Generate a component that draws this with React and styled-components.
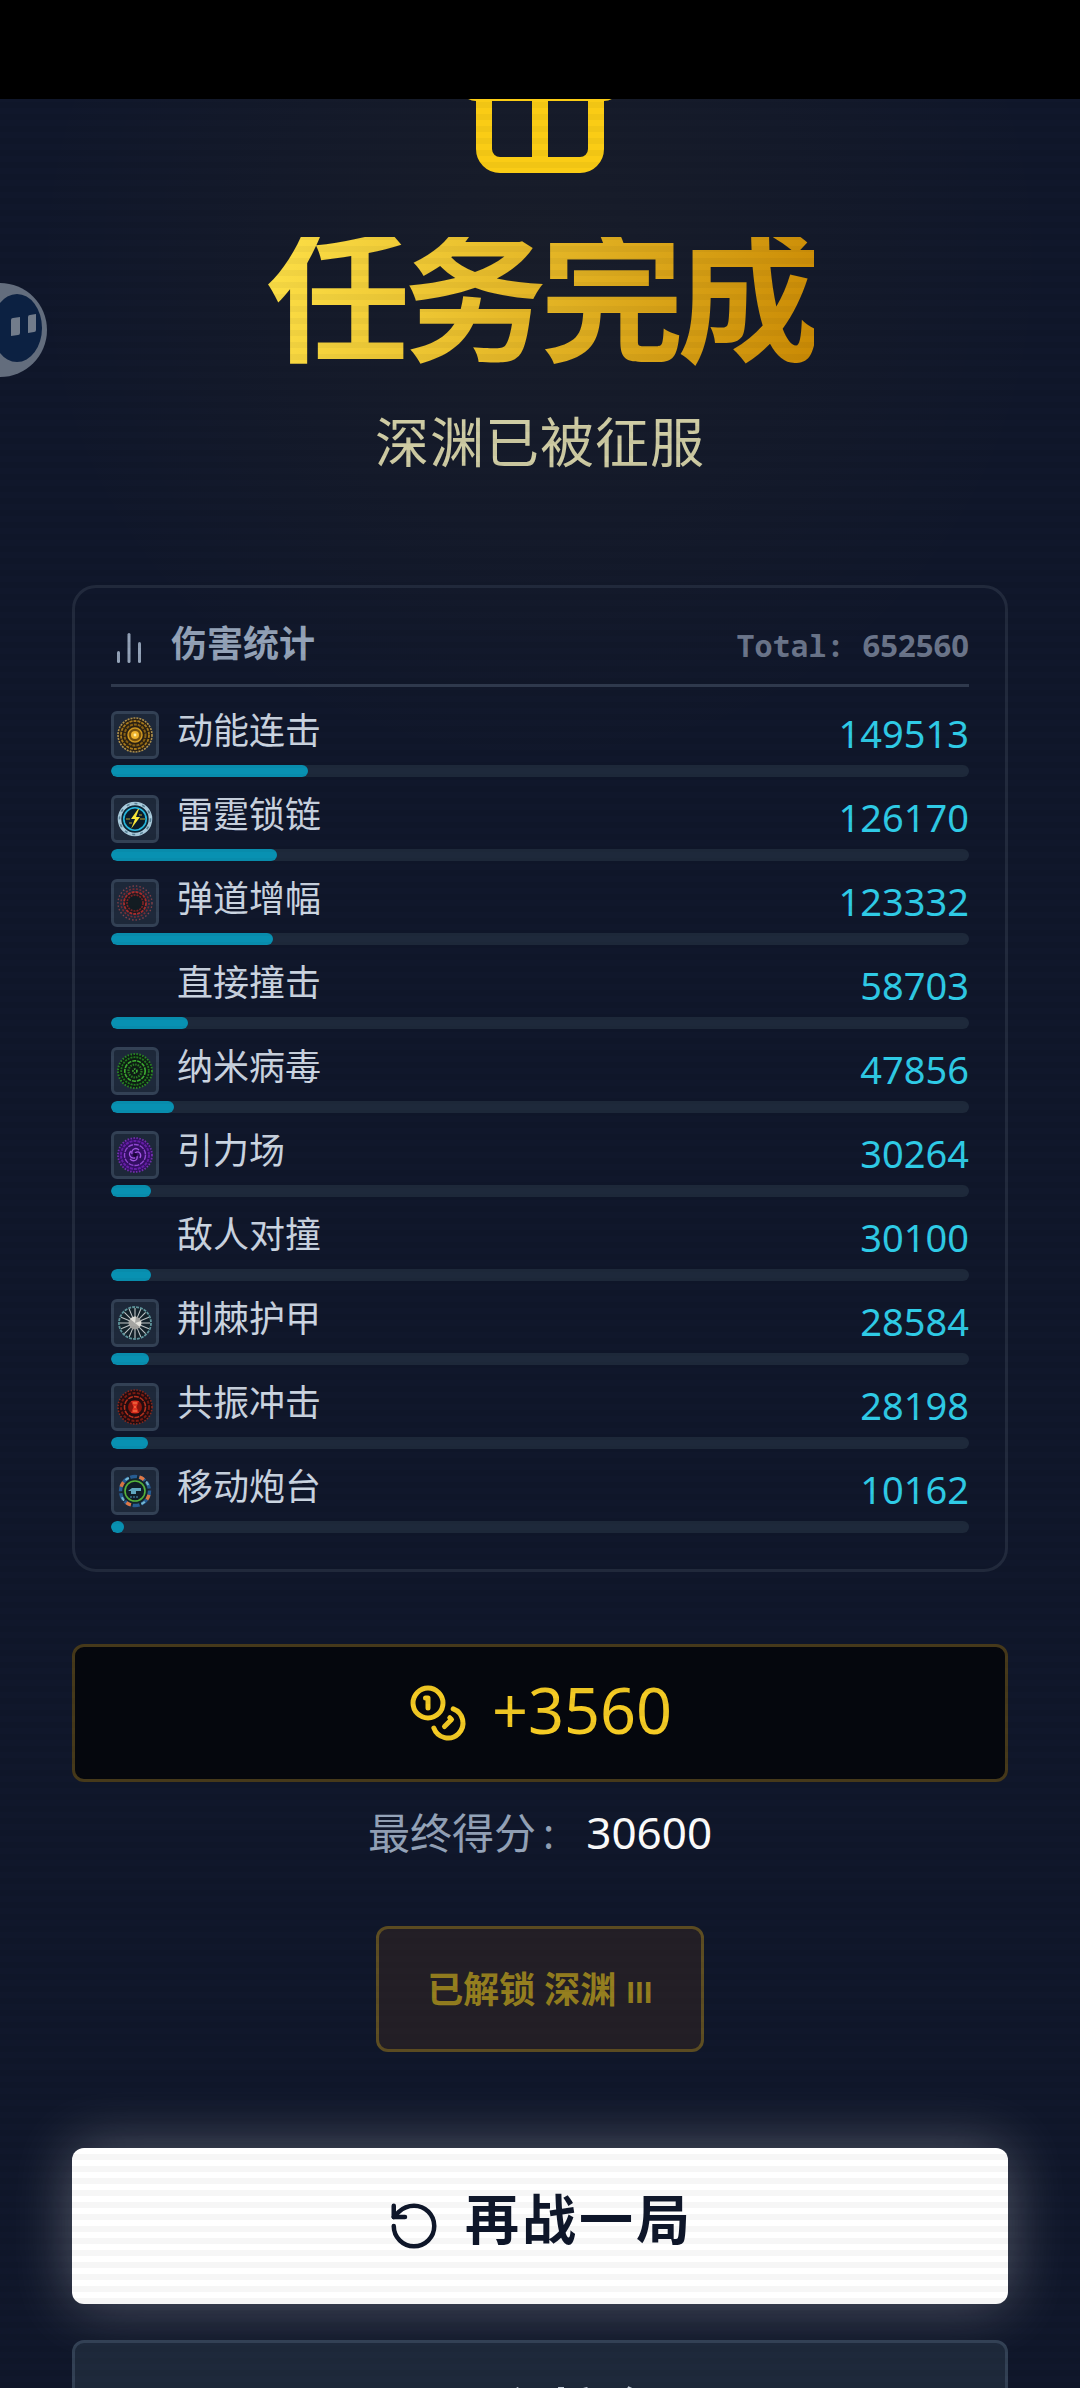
import React from 'react';
import styled, { createGlobalStyle } from 'styled-components';
import { ChartNoAxesColumn, Coins, Gift, House, RotateCcw } from 'lucide-react';

const sans = `Roboto, 'Noto Sans CJK SC', sans-serif`;
const mono = `'Noto Sans Mono', 'Noto Sans CJK SC', monospace`;
const numeric = `'Noto Sans', 'Noto Sans CJK SC', sans-serif`;

const GlobalStyle = createGlobalStyle`
  *, *::before, *::after { box-sizing: border-box; }
  html, body { margin: 0; background: #10172b; }
  body { font-family: ${sans}; overflow-x: hidden; }
`;

const Screen = styled.div`
  position: relative;
  height: 100vh;
  overflow: hidden;
  display: flex;
  flex-direction: column;
  background: radial-gradient(circle at 50% 260px, rgba(234, 179, 8, 0.04), rgba(234, 179, 8, 0) 520px), #10172b;
`;

const StatusBar = styled.div`
  flex: none;
  height: 99px;
  background: #000;
`;

const Scanlines = styled.div`
  position: absolute;
  inset: 99px 0 0;
  pointer-events: none;
  background: linear-gradient(rgba(0, 0, 0, 0) 50%, rgba(0, 0, 0, 0.035) 50%) 0 9px / 100% 12px;
`;

const Content = styled.main`
  flex: 1;
  min-height: 0;
  overflow: hidden;
  display: flex;
  flex-direction: column;
  align-items: center;
  padding: 0 72px;
`;

const IconClip = styled.div`
  flex: none;
  height: 90px;
  display: flex;
  align-items: flex-end;
  overflow: hidden;
  color: #facc15;

  svg { flex: none; }
`;

const Title = styled.h1`
  flex: none;
  margin: 48px 0 0;
  font-size: 144px;
  line-height: 130px;
  font-weight: 700;
  letter-spacing: -7px;
  color: transparent;
  background: linear-gradient(105deg, #fde047, #ca8a04);
  -webkit-background-clip: text;
  background-clip: text;
`;

const Subtitle = styled.p`
  flex: none;
  margin: 36px 0 0;
  font-size: 54px;
  line-height: 84px;
  letter-spacing: 1px;
  color: rgba(254, 249, 195, 0.8);
`;

const Panel = styled.section`
  flex: none;
  align-self: stretch;
  margin-top: 98px;
  padding: 36px;
  border: 3px solid #222a3d;
  border-radius: 24px;
`;

const PanelHeader = styled.header`
  display: flex;
  align-items: center;
  justify-content: space-between;
  height: 63px;
  padding-bottom: 12px;
  border-bottom: 3px solid #2f394d;
`;

const PanelTitle = styled.h2`
  display: flex;
  align-items: center;
  gap: 24px;
  margin: 0;
  font-size: 36px;
  line-height: 48px;
  font-weight: 700;
  color: #94a3b8;
`;

const Label = styled.span`
  padding-bottom: ${(p) => p.$lift || 0}px;
`;

const Total = styled.span`
  padding-bottom: 6px;
  font-family: ${mono};
  font-size: 30px;
  line-height: 42px;
  font-weight: 700;
  color: #6b758a;
`;

const Digits = styled.span`
  font-family: ${numeric};
  font-size: ${(p) => p.$size}px;
  font-weight: ${(p) => (p.$bold ? 700 : 400)};
  color: ${(p) => p.$color || 'inherit'};
`;

const StatList = styled.ul`
  display: grid;
  gap: 18px;
  margin: 24px 0 0;
  padding: 0;
  list-style: none;
`;

const StatRow = styled.li`
  display: grid;
  gap: 6px;
`;

const StatLine = styled.div`
  display: flex;
  align-items: center;
  height: 48px;
`;

const Badge = styled.span`
  display: flex;
  align-items: center;
  justify-content: center;
  width: 48px;
  height: 48px;
  margin-right: 18px;
  border: 3px solid ${(p) => (p.$empty ? 'transparent' : '#334155')};
  border-radius: 6px;
  background: ${(p) => (p.$empty ? 'transparent' : '#1e293b')};
`;

const StatName = styled.span`
  flex: 1;
  font-size: 36px;
  line-height: 42px;
  padding-bottom: 6px;
  color: #cbd5e1;
`;

const StatValue = styled.span`
  padding-bottom: 4px;
  font-family: ${numeric};
  font-size: 38px;
  line-height: 42px;
  color: #2fcbe6;
`;

const Track = styled.div`
  height: 12px;
  border-radius: 6px;
  background: #1e293b;
  overflow: hidden;
`;

const Fill = styled.div`
  height: 100%;
  border-radius: 6px;
  background: #0891b2;
`;

const Reward = styled.div`
  flex: none;
  align-self: stretch;
  display: flex;
  align-items: center;
  justify-content: center;
  gap: 24px;
  height: 138px;
  margin-top: 72px;
  border: 3px solid #46391a;
  border-radius: 12px;
  background: #05070d;
  font-family: ${numeric};
  font-size: 63px;
  line-height: 84px;
  color: #f5cb24;
`;

const Score = styled.p`
  flex: none;
  margin: 20px 0 0;
  font-family: ${mono};
  font-size: 42px;
  line-height: 60px;
  white-space: pre;
  color: #94a3b8;
`;

const Unlock = styled.div`
  flex: none;
  display: flex;
  align-items: baseline;
  gap: 10px;
  height: 126px;
  margin-top: 63px;
  padding: 35px 48px 0;
  border: 3px solid #5e4e22;
  border-radius: 12px;
  background: #231f26;
  font-size: 36px;
  line-height: 54px;
  font-weight: 700;
  color: #957f1f;
`;

const Tier = styled.span`
  font-size: 30px;
`;

const Button = styled.button`
  flex: none;
  align-self: stretch;
  display: flex;
  align-items: center;
  justify-content: center;
  gap: 24px;
  height: 156px;
  margin-top: ${(p) => (p.$primary ? 96 : 36)}px;
  padding: 0;
  border: ${(p) => (p.$primary ? 'none' : '3px solid #334155')};
  border-radius: 12px;
  background: ${(p) => (p.$primary ? '#fff' : '#1e293b')};
  box-shadow: ${(p) => (p.$primary ? '0 0 60px rgba(255, 255, 255, 0.3)' : 'none')};
  font-family: ${sans};
  font-size: 54px;
  font-weight: 700;
  letter-spacing: 3px;
  color: ${(p) => (p.$primary ? '#0f172a' : '#cbd5e1')};
`;

const Floating = styled.button`
  position: absolute;
  left: -48px;
  top: 282px;
  width: 96px;
  height: 96px;
  padding: 0;
  border: none;
  background: none;
`;

const emblems = {
  gold: (
    <>
      <circle cx="18" cy="18" r="17" fill="#2a2013" stroke="#b0924f" strokeWidth="1.6" strokeDasharray="2 1" />
      <circle cx="18" cy="18" r="14" fill="none" stroke="#a87a1c" strokeWidth="1.8" strokeDasharray="3 1" />
      <circle cx="18" cy="18" r="10.5" fill="none" stroke="#8a6214" strokeWidth="2" strokeDasharray="3 1" />
      <circle cx="18" cy="18" r="7" fill="#7a520d" stroke="#d19a22" strokeWidth="1.5" />
      <circle cx="18" cy="18" r="4" fill="#f0b32e" />
      <circle cx="18" cy="18" r="1.4" fill="#fff0a8" />
    </>
  ),
  bolt: (
    <>
      <circle cx="18" cy="18" r="15.5" fill="#0d2534" stroke="#a9cbdc" strokeWidth="3.6" />
      <circle cx="18" cy="18" r="15.5" fill="none" stroke="#5b8296" strokeWidth="1.6" strokeDasharray="3 5" />
      <circle cx="18" cy="18" r="11.2" fill="#0a1c2b" stroke="#27b9e0" strokeWidth="1.6" />
      <path d="M9 18h4M23 18h5M12 22h3M22 14h3" stroke="#b9a52a" strokeWidth="1" />
      <path d="M21 8l-7 10h4l-4 10 9-12h-4l3-8z" fill="#fde93a" />
    </>
  ),
  ember: (
    <>
      <circle cx="18" cy="18" r="17" fill="none" stroke="#84424a" strokeWidth="1.4" strokeDasharray="1.5 2" />
      <circle cx="18" cy="18" r="14" fill="none" stroke="#7c2c32" strokeWidth="1.6" strokeDasharray="2 1.5" />
      <circle cx="18" cy="18" r="11" fill="#1b1a20" stroke="#a82c2c" strokeWidth="1.8" strokeDasharray="3 1" />
      <circle cx="18" cy="18" r="8" fill="#131c22" stroke="#822326" strokeWidth="1.6" strokeDasharray="2 1" />
    </>
  ),
  virus: (
    <>
      <circle cx="18" cy="18" r="17" fill="#0d1c14" stroke="#2a8a24" strokeWidth="2" strokeDasharray="1.5 1.5" />
      <circle cx="18" cy="18" r="13.8" fill="none" stroke="#237a20" strokeWidth="1.8" strokeDasharray="2 1" />
      <circle cx="18" cy="18" r="10.2" fill="none" stroke="#3fae33" strokeWidth="1.6" strokeDasharray="4 1" />
      <circle cx="18" cy="18" r="6.5" fill="none" stroke="#2a7c24" strokeWidth="2.2" strokeDasharray="1.5 1" />
      <circle cx="18" cy="18" r="2" fill="none" stroke="#45b839" strokeWidth="1.5" strokeDasharray="1.5 1" />
    </>
  ),
  gravity: (
    <>
      <circle cx="18" cy="18" r="17" fill="#350f66" stroke="#7530b0" strokeWidth="1.8" strokeDasharray="1.5 1.5" />
      <circle cx="18" cy="18" r="14" fill="none" stroke="#651fa6" strokeWidth="2" strokeDasharray="3 1" />
      <circle cx="18" cy="18" r="10.5" fill="none" stroke="#9148d2" strokeWidth="1.4" strokeDasharray="5 1" />
      <path d="M18 16c4-3 7 1 5 5M20 19c1 5-4 6-7 3M18 21c-5 1-7-4-4-7M15 17c-1-5 4-7 7-4" fill="none" stroke="#a557e6" strokeWidth="1.3" />
      <circle cx="18" cy="18" r="2" fill="#190638" />
    </>
  ),
  thorn: (
    <>
      <circle cx="18" cy="18" r="16" fill="#14222b" stroke="#5f959c" strokeWidth="1.8" strokeDasharray="3 1" />
      <path
        d="M18 3v30M3 18h30M7.4 7.4l21.2 21.2M28.6 7.4L7.4 28.6M12.2 4.1l11.6 27.8M23.8 4.1L12.2 31.9M4.1 12.2l27.8 11.6M31.9 12.2L4.1 23.8"
        stroke="#c3c9cb"
        strokeWidth="1.1"
      />
      <circle cx="18" cy="18" r="6.5" fill="#a5a5a2" />
      <path d="M18 18l-5-4a6.5 6.5 0 0 1 6-2.5zM18 18l5 4a6.5 6.5 0 0 0 1-6z" fill="#e3e2dc" />
    </>
  ),
  pulse: (
    <>
      <circle cx="18" cy="18" r="17" fill="#220c10" stroke="#8c281c" strokeWidth="1.6" strokeDasharray="1.5 1.5" />
      <circle cx="18" cy="18" r="14" fill="none" stroke="#7a1b12" strokeWidth="2" strokeDasharray="3 1.5" />
      <circle cx="18" cy="18" r="10.5" fill="none" stroke="#b4301d" strokeWidth="1.6" strokeDasharray="5 1" />
      <circle cx="18" cy="18" r="7" fill="#8a150c" />
      <path d="M14 12h8l-2.5 6 2.5 6h-8l2.5-6z" fill="#e23220" />
      <path d="M16 14h4M16 22h4M17 18h2" stroke="#ff8b55" strokeWidth="1.2" />
    </>
  ),
  turret: (
    <>
      <circle cx="18" cy="18" r="14.5" fill="#13242c" stroke="#275d94" strokeWidth="3.4" strokeDasharray="7 2" />
      <circle cx="18" cy="18" r="14.5" fill="none" stroke="#e07845" strokeWidth="3.4" strokeDasharray="5 17.8" strokeDashoffset="-4" />
      <circle cx="18" cy="18" r="14.5" fill="none" stroke="#79bcd4" strokeWidth="2" strokeDasharray="4 18.8" strokeDashoffset="-12" />
      <circle cx="18" cy="18" r="10" fill="#101d28" stroke="#56b43c" strokeWidth="1.6" />
      <path d="M11 18l4-3h9v3h-5v3h-5v-3z" fill="#5fa6bf" />
      <path d="M13 24h9" stroke="#3b6f8f" strokeWidth="1.5" strokeDasharray="2 1" />
    </>
  ),
};

const total = 652560;

const stats = [
  { name: '动能连击', value: 149513, emblem: 'gold' },
  { name: '雷霆锁链', value: 126170, emblem: 'bolt' },
  { name: '弹道增幅', value: 123332, emblem: 'ember' },
  { name: '直接撞击', value: 58703 },
  { name: '纳米病毒', value: 47856, emblem: 'virus' },
  { name: '引力场', value: 30264, emblem: 'gravity' },
  { name: '敌人对撞', value: 30100 },
  { name: '荆棘护甲', value: 28584, emblem: 'thorn' },
  { name: '共振冲击', value: 28198, emblem: 'pulse' },
  { name: '移动炮台', value: 10162, emblem: 'turret' },
];

export default function App() {
  return (
    <Screen>
      <GlobalStyle />
      <StatusBar />
      <Content>
        <IconClip>
          <Gift size={192} />
        </IconClip>
        <Title>任务完成</Title>
        <Subtitle>深渊已被征服</Subtitle>

        <Panel>
          <PanelHeader>
            <PanelTitle>
              <ChartNoAxesColumn size={36} />
              <Label $lift={6}>伤害统计</Label>
            </PanelTitle>
            <Total>
              Total: <Digits $size={31} $bold>{total}</Digits>
            </Total>
          </PanelHeader>
          <StatList>
            {stats.map((s) => (
              <StatRow key={s.name}>
                <StatLine>
                  <Badge $empty={!s.emblem}>
                    {s.emblem && (
                      <svg width="36" height="36" viewBox="0 0 36 36" aria-hidden="true">
                        {emblems[s.emblem]}
                      </svg>
                    )}
                  </Badge>
                  <StatName>{s.name}</StatName>
                  <StatValue>{s.value}</StatValue>
                </StatLine>
                <Track>
                  <Fill style={{ width: `${(s.value / total) * 100}%` }} />
                </Track>
              </StatRow>
            ))}
          </StatList>
        </Panel>

        <Reward>
          <Coins size={60} />
          <Label $lift={6}>+3560</Label>
        </Reward>
        <Score>
          最终得分: <Digits $size={44} $color="#fff">30600</Digits>
        </Score>
        <Unlock>
          已解锁 深渊 <Tier>III</Tier>
        </Unlock>

        <Button type="button" $primary>
          <RotateCcw size={54} />
          <Label $lift={20}>再战一局</Label>
        </Button>
        <Button type="button">
          <House size={54} />
          <Label $lift={16}>主控台</Label>
        </Button>
      </Content>
      <Scanlines />
      <Floating type="button" aria-label="助手">
        <svg width="96" height="96" viewBox="0 0 96 96" aria-hidden="true">
          <circle cx="48" cy="48" r="47" fill="#636d7d" />
          <ellipse cx="65" cy="46" rx="25" ry="34" fill="#0c2142" />
          <path d="M59 38q0-2 2-2l7-1v16q0 2-2 2l-7 1zM76 35q0-2 2-2l6-1v16q0 2-2 2l-6 1z" fill="#727c8b" />
        </svg>
      </Floating>
    </Screen>
  );
}
